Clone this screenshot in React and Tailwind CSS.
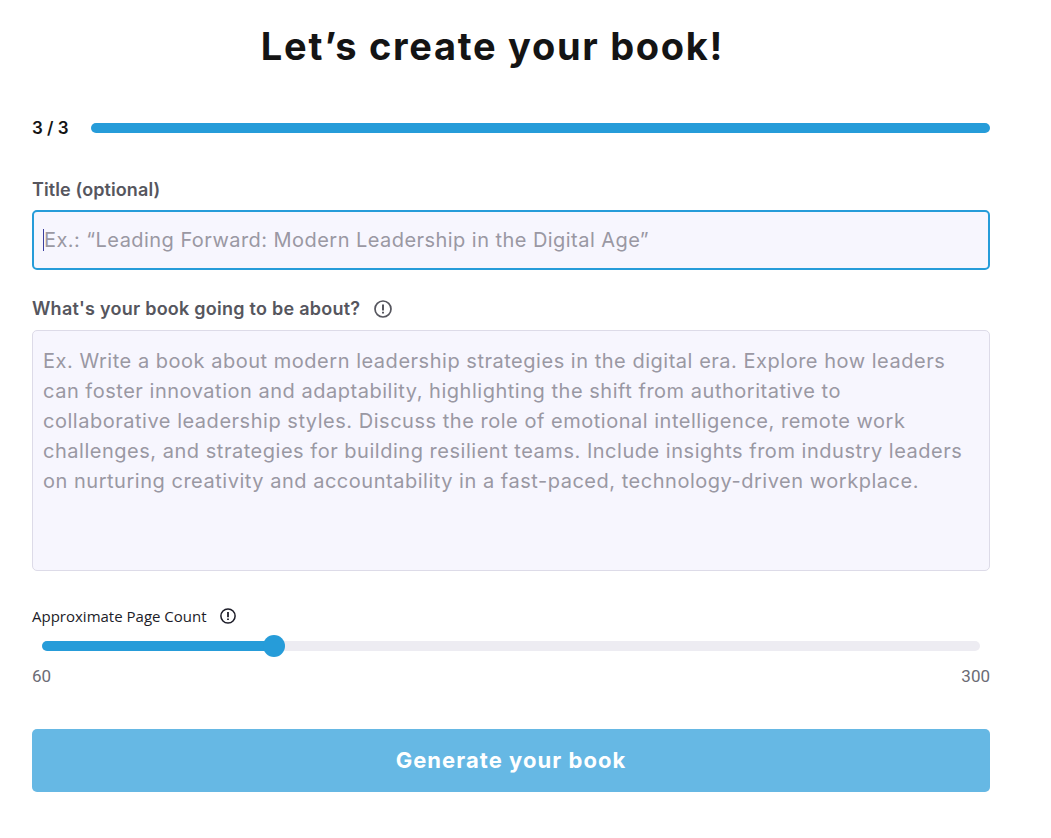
import React from "react";

const InfoIcon = ({ className }) => (
  <svg className={className} viewBox="0 0 18 18" fill="none" stroke="currentColor">
    <circle cx="9" cy="9" r="8" strokeWidth="1.7" />
    <path d="M9 4.4v6" strokeWidth="2" />
    <path d="M9 11.8v1.8" strokeWidth="2" />
  </svg>
);

const placeholder =
  "Ex. Write a book about modern leadership strategies in the digital era. Explore how leaders\ncan foster innovation and adaptability, highlighting the shift from authoritative to\ncollaborative leadership styles. Discuss the role of emotional intelligence, remote work\nchallenges, and strategies for building resilient teams. Include insights from industry leaders\non nurturing creativity and accountability in a fast-paced, technology-driven workplace.";

export default function App() {
  return (
    <div className="w-[1051px] h-[838px] bg-white pl-8 font-['Inter',sans-serif] overflow-hidden">
      <h1 className="w-[921px] mt-0 pt-[24px] text-center text-[38px] leading-[44px] font-bold text-[#141414] tracking-[1.7px]">
        Let’s create your book!
      </h1>

      <div className="w-[958px] mt-[50px] flex items-center">
        <span className="w-[59px] text-[17px] leading-5 font-semibold text-[#141414]">3 / 3</span>
        <div className="flex-1 h-[10px] rounded-full bg-[#269cd9]"></div>
      </div>

      <label className="block mt-[42px] text-[18px] leading-5 font-semibold text-[#56565e] tracking-[0.1px]">Title (optional)</label>
      <div className="relative mt-[10px] w-[958px]">
        <input
          readOnly
          placeholder="Ex.: “Leading Forward: Modern Leadership in the Digital Age”"
          className="w-full h-[60px] px-[10px] rounded-[5px] border-2 border-[#269cd9] bg-[#f7f6fe] text-[20px] tracking-[0.45px] outline-none placeholder:text-[#9a98a3]"
        />
        <span className="absolute left-[11px] top-[19px] w-px h-[22px] bg-[#3b3f9e]"></span>
      </div>

      <div className="mt-[29px] flex items-center text-[#56565e]">
        <label className="text-[18px] leading-5 font-semibold tracking-[0.25px]">What's your book going to be about?</label>
        <InfoIcon className="ml-[14px] w-[18px] h-[18px]" />
      </div>
      <textarea
        readOnly
        placeholder={placeholder}
        className="block mt-[11px] w-[958px] h-[241px] px-[10px] py-[15px] rounded-[5px] border border-[#dddbe8] bg-[#f7f6fe] text-[20px] leading-[30px] tracking-[0.52px] outline-none resize-none overflow-hidden placeholder:text-[#9a98a3]"
      />

      <div className="mt-[35px] flex items-center font-['Open_Sans',sans-serif] text-[#1c1c28]">
        <label className="text-[15px] leading-5">Approximate Page Count</label>
        <InfoIcon className="ml-[13px] w-[16px] h-[16px]" />
      </div>
      <div className="relative mt-[15px] ml-[10px] w-[938px] h-[10px] rounded-full bg-[#edecf2]">
        <div className="w-[232px] h-full rounded-full bg-[#269cd9]"></div>
        <div className="absolute left-[221px] -top-[6px] w-[22px] h-[22px] rounded-full bg-[#269cd9]"></div>
      </div>
      <div className="mt-[15px] w-[958px] flex justify-between font-['Roboto',sans-serif] text-[17px] leading-5 text-[#6b6b75]">
        <span>60</span>
        <span>300</span>
      </div>

      <button className="mt-[43px] w-[958px] h-[63px] rounded-[5px] bg-[#66b8e4] text-white text-[22px] font-bold tracking-[1.05px]">
        Generate your book
      </button>
    </div>
  );
}
